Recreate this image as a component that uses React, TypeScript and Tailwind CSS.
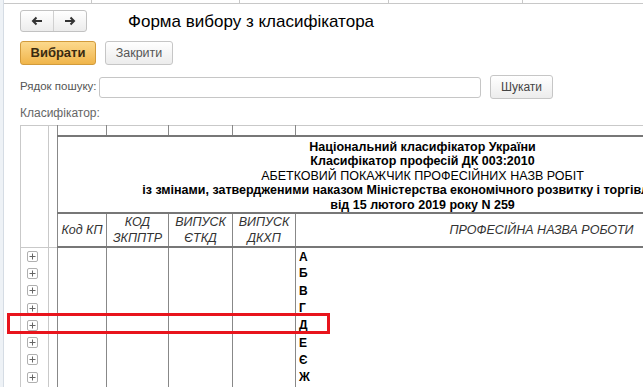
import React from 'react'

const LETTERS = ['А', 'Б', 'В', 'Г', 'Д', 'Е', 'Є', 'Ж', 'З']

function PlusBox() {
  return (
    <span className="flex h-[11px] w-[11px] items-center justify-center rounded-[2px] border border-[#b0b0b0] bg-white">
      <svg width="7" height="7" viewBox="0 0 7 7">
        <path d="M3.5 0.5v6M0.5 3.5h6" stroke="#666" strokeWidth="1" />
      </svg>
    </span>
  )
}

export default function App() {
  return (
    <div className="relative flex h-[387px] w-[643px] overflow-hidden bg-white font-['Liberation_Sans',Arial,sans-serif] text-[#444]">
      {/* left window edge */}
      <div className="w-[4px] shrink-0 border-r border-[#d5dce4] bg-[#eef2f6]" />

      <div className="flex min-w-0 flex-1 flex-col">
        {/* top strip left over from the window above */}
        <div className="flex h-[4px] shrink-0 border-b border-[#c8c8c8]">
          <div className="w-[88px] border-r border-[#c8c8c8]" />
          <div className="w-[148px] border-r border-[#c8c8c8]" />
          <div className="w-[149px] border-r border-[#c8c8c8]" />
          <div className="w-[134px] border-r border-[#c8c8c8]" />
        </div>

        <div className="flex flex-col pl-[16px]">
          {/* header: nav + title */}
          <div className="mt-[6px] flex h-[22px] items-center">
            <div className="flex h-[22px] w-[67px] overflow-hidden rounded-[3px] border border-[#c2c2c2] bg-gradient-to-b from-white to-[#ececec]">
              <div className="flex flex-1 items-center justify-center border-r border-[#d0d0d0]">
                <svg width="12" height="10" viewBox="0 0 12 10">
                  <path d="M11 5H2.5M5.5 1.5L2 5l3.5 3.5" stroke="#333" strokeWidth="2" fill="none" />
                </svg>
              </div>
              <div className="flex flex-1 items-center justify-center">
                <svg width="12" height="10" viewBox="0 0 12 10">
                  <path d="M1 5h8.5M6.5 1.5L10 5 6.5 8.5" stroke="#333" strokeWidth="2" fill="none" />
                </svg>
              </div>
            </div>
            <div className="ml-[41px] text-[17px] leading-none text-black">Форма вибору з класифікатора</div>
          </div>

          {/* action buttons */}
          <div className="mt-[9px] flex h-[24px] gap-[9px]">
            <button className="w-[76px] rounded-[3px] border border-[#d29b3c] bg-gradient-to-b from-[#fcd98c] to-[#f0b549] text-[13px] font-bold text-[#3a2a10]">
              Вибрати
            </button>
            <button className="w-[68px] rounded-[3px] border border-[#c6c6c6] bg-gradient-to-b from-white to-[#ececec] text-[12.5px] text-[#555]">
              Закрити
            </button>
          </div>

          {/* search row */}
          <div className="mt-[10px] flex h-[24px] items-center">
            <span className="w-[79px] shrink-0 whitespace-nowrap text-[11.5px] text-[#555]">Рядок пошуку:</span>
            <div className="h-[21px] w-[382px] shrink-0 rounded-[3px] border border-[#c6c6c6] bg-white" />
            <button className="ml-[9px] h-[24px] w-[63px] shrink-0 rounded-[3px] border border-[#c6c6c6] bg-gradient-to-b from-white to-[#ececec] text-[12px] text-[#444]">
              Шукати
            </button>
          </div>

          <div className="mt-[7px] whitespace-nowrap text-[12px] leading-[15px] text-[#666]">Класифікатор:</div>

          {/* classifier table */}
          <div className="mt-[4px] w-[767px]">
            <table className="w-[767px] table-fixed border-collapse text-[12.5px] text-black">
              <colgroup>
                <col className="w-[28px]" />
                <col className="w-[9px]" />
                <col className="w-[49px]" />
                <col className="w-[62px]" />
                <col className="w-[64px]" />
                <col className="w-[63px]" />
                <col />
              </colgroup>
              <tbody>
                <tr className="h-[10px]">
                  <td rowSpan={3} className="border border-[#c9c9c9]" />
                  <td rowSpan={3} className="border border-[#c9c9c9] border-r-[#888]" />
                  <td className="border-t border-r border-t-[#c9c9c9] border-r-[#888] border-b-2 border-b-[#777]" />
                  <td className="border-t border-r border-t-[#c9c9c9] border-r-[#888] border-b-2 border-b-[#777]" />
                  <td className="border-t border-r border-t-[#c9c9c9] border-r-[#888] border-b-2 border-b-[#777]" />
                  <td className="border-t border-r border-t-[#c9c9c9] border-r-[#888] border-b-2 border-b-[#777]" />
                  <td className="border-t border-t-[#c9c9c9] border-b-2 border-b-[#777]" />
                </tr>
                <tr className="h-[77px]">
                  <td colSpan={5} className="border-b-2 border-b-[#777] pt-[3px] text-center align-top leading-[14.6px]">
                    <div className="font-bold">Національний класифікатор України</div>
                    <div className="font-bold">Класифікатор професій ДК 003:2010</div>
                    <div>АБЕТКОВИЙ ПОКАЖЧИК ПРОФЕСІЙНИХ НАЗВ РОБІТ</div>
                    <div className="-mx-[80px] whitespace-nowrap font-bold">
                      із змінами, затвердженими наказом Міністерства економічного розвитку і торгівлі України
                    </div>
                    <div className="font-bold">від 15 лютого 2019 року N 259</div>
                  </td>
                </tr>
                <tr className="h-[33px] text-center italic leading-[16px] text-[#333]">
                  <td className="border-r border-b-2 border-r-[#888] border-b-[#777]">Код КП</td>
                  <td className="border-r border-b-2 border-r-[#888] border-b-[#777]">
                    КОД
                    <br />
                    ЗКППТР
                  </td>
                  <td className="border-r border-b-2 border-r-[#888] border-b-[#777]">
                    ВИПУСК
                    <br />
                    ЄТКД
                  </td>
                  <td className="border-r border-b-2 border-r-[#888] border-b-[#777]">
                    ВИПУСК
                    <br />
                    ДКХП
                  </td>
                  <td className="border-b-2 border-b-[#777]">ПРОФЕСІЙНА НАЗВА РОБОТИ</td>
                </tr>
                {LETTERS.map((l) => (
                  <tr key={l} className="h-[17.3px]">
                    <td className="border-x border-[#c9c9c9] p-0">
                      <div className="flex justify-center pr-[4px]">
                        <PlusBox />
                      </div>
                    </td>
                    <td className="border-r border-r-[#888] p-0" />
                    <td className="border-r border-r-[#888] p-0" />
                    <td className="border-r border-r-[#888] p-0" />
                    <td className="border-r border-r-[#888] p-0" />
                    <td className="border-r border-r-[#888] p-0" />
                    <td className="p-0 pl-[3px] text-[12px] leading-none font-bold">{l}</td>
                  </tr>
                ))}
              </tbody>
            </table>
          </div>
        </div>
      </div>

      {/* red highlight frame around the "Д" row */}
      <div className="pointer-events-none absolute top-[313px] left-[7px] h-[21px] w-[323px] border-[3px] border-[#e8141c]" />
    </div>
  )
}
